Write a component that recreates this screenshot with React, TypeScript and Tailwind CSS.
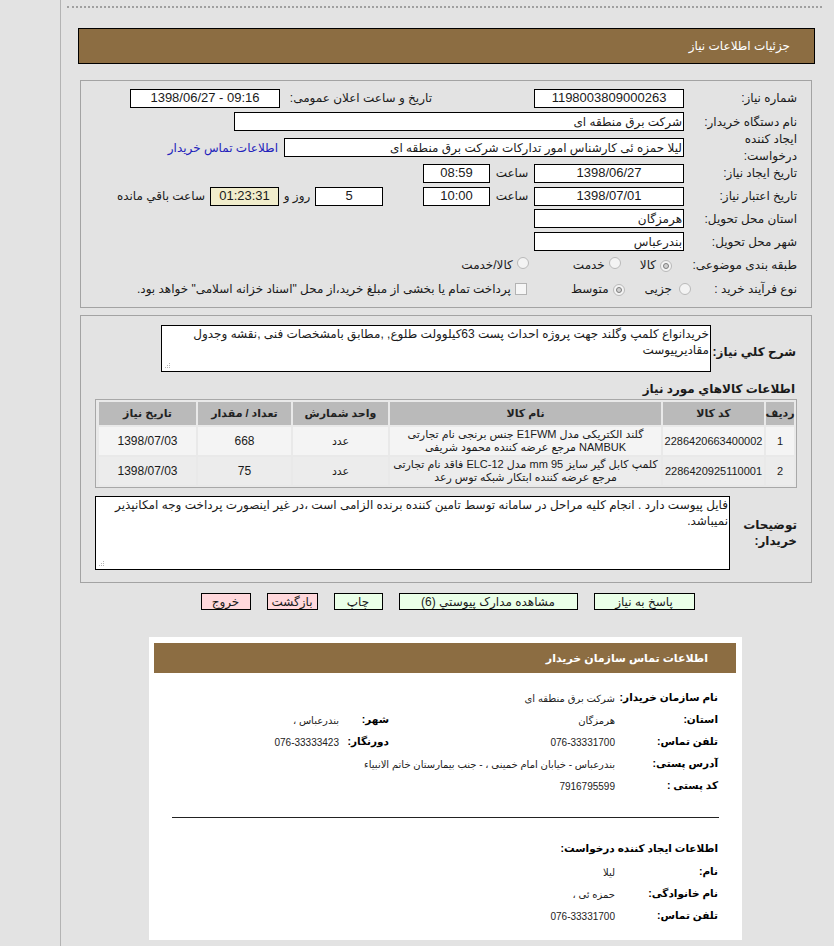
import React from "react";

const Radio = ({ checked }: { checked?: boolean }) => (
  <span className="inline-flex h-[12px] w-[12px] shrink-0 items-center justify-center rounded-full border border-[#b9b9b9] bg-[#f3f3f3]">
    {checked && <span className="h-[6px] w-[6px] rounded-full border border-[#7d7d7d] bg-[#d0d0d0]" />}
  </span>
);

const Grip = () => (
  <svg width="8" height="8" className="absolute bottom-[2px] left-[3px]">
    <g fill="#b4b4b4">
      <rect x="0" y="6" width="1" height="1" />
      <rect x="2" y="6" width="1" height="1" />
      <rect x="4" y="6" width="1" height="1" />
      <rect x="2" y="4" width="1" height="1" />
      <rect x="4" y="4" width="1" height="1" />
      <rect x="4" y="2" width="1" height="1" />
    </g>
  </svg>
);

const Label = ({ children }: { children: React.ReactNode }) => (
  <div className="w-[113px] shrink-0 text-right">{children}</div>
);

const CL = ({ children, w = "w-[103px]" }: { children: React.ReactNode; w?: string }) => (
  <div className={`${w} shrink-0 whitespace-nowrap text-[10.5px] font-bold text-black`}>{children}</div>
);

export default function App() {
  return (
    <div className="flex min-h-[946px] w-[834px] bg-[#e3e3e3] font-['Liberation_Sans','DejaVu_Sans',sans-serif] text-[12px] text-[#1a1a1a]">
      <div className="w-[61px] shrink-0 border-r border-[#b3b3b3]" />
      <div className="flex min-w-0 flex-1 flex-col">
        <div className="ml-[6px] mr-[12px] mt-[6px] border-t-2 border-dotted border-[#a0a0a0]" />
        <div
          dir="rtl"
          className="ml-[17px] mr-[19px] mt-[20px] flex h-[36px] items-center border border-black bg-[#8c6d42] pr-[24px] text-[12px] text-white"
        >
          جزئیات اطلاعات نیاز
        </div>

        {/* Panel 1 */}
        <div dir="rtl" className="ml-[19px] mr-[22px] mt-[16px] border border-[#a3a3a3] pb-[6px] pr-[14px] pt-[6px]">
          <div className="flex h-[22px] items-center">
            <Label>شماره نیاز:</Label>
            <div className="flex h-[19px] w-[150px] items-center justify-center border border-black bg-white text-[13px]">1198003809000263</div>
            <div className="ms-[102px] w-[152px] text-right">تاریخ و ساعت اعلان عمومی:</div>
            <div dir="ltr" className="flex h-[19px] w-[150px] items-center justify-center border border-black bg-white text-[13px]">1398/06/27 - 09:16</div>
          </div>
          <div className="flex h-[25px] items-center">
            <Label>نام دستگاه خریدار:</Label>
            <div className="flex h-[19px] w-[450px] items-center border border-black bg-white pr-[1px]">شرکت برق منطقه ای</div>
          </div>
          <div className="flex h-[27px] items-center">
            <Label>
              <div className="leading-[17px]">
                ایجاد کننده
                <br />
                درخواست:
              </div>
            </Label>
            <div className="flex h-[19px] w-[400px] items-center border border-black bg-white pr-[1px]">لیلا حمزه ئی کارشناس امور تدارکات شرکت برق منطقه ای</div>
            <a className="ms-[6px] text-[#2222bb]">اطلاعات تماس خریدار</a>
          </div>
          <div className="flex h-[24px] items-center">
            <Label>تاریخ ایجاد نیاز:</Label>
            <div className="flex h-[19px] w-[150px] items-center justify-center border border-black bg-white text-[13px]">1398/06/27</div>
            <div className="w-[44px] text-center">ساعت</div>
            <div className="flex h-[19px] w-[67px] items-center justify-center border border-black bg-white text-[13px]">08:59</div>
          </div>
          <div className="flex h-[22px] items-center">
            <Label>تاریخ اعتبار نیاز:</Label>
            <div className="flex h-[19px] w-[150px] items-center justify-center border border-black bg-white text-[13px]">1398/07/01</div>
            <div className="w-[44px] text-center">ساعت</div>
            <div className="flex h-[19px] w-[67px] items-center justify-center border border-black bg-white text-[13px]">10:00</div>
            <div className="ms-[40px] flex h-[19px] w-[68px] items-center justify-center border border-black bg-white text-[13px]">5</div>
            <div className="w-[36px] text-center">روز و</div>
            <div className="flex h-[19px] w-[69px] items-center justify-center border border-black bg-[#f1edcc] text-[13px]">01:23:31</div>
            <div className="ms-[5px]">ساعت باقي مانده</div>
          </div>
          <div className="flex h-[23px] items-center">
            <Label>استان محل تحویل:</Label>
            <div className="flex h-[19px] w-[150px] items-center border border-black bg-white pr-[1px]">هرمزگان</div>
          </div>
          <div className="flex h-[23px] items-center">
            <Label>شهر محل تحویل:</Label>
            <div className="flex h-[19px] w-[150px] items-center border border-black bg-white pr-[1px]">بندرعباس</div>
          </div>
          <div className="flex h-[24px] items-center">
            <Label>طبقه بندی موضوعی:</Label>
            <span className="ms-[12px]"><Radio checked /></span>
            <span className="ms-[4px]">کالا</span>
            <span className="ms-[19px]"><Radio /></span>
            <span className="ms-[4px]">خدمت</span>
            <span className="ms-[44px]"><Radio /></span>
            <span className="ms-[4px]">کالا/خدمت</span>
          </div>
          <div className="flex h-[24px] items-center">
            <div className="w-[106px] shrink-0 text-right">نوع فرآیند خرید :</div>
            <Radio />
            <span className="ms-[7px]">جزیی</span>
            <span className="ms-[20px]"><Radio checked /></span>
            <span className="ms-[4px]">متوسط</span>
            <span className="ms-[44px] inline-block h-[12px] w-[12px] border border-[#b3b3b3] bg-[#f6f6f6]" />
            <span className="ms-[4px]">پرداخت تمام یا بخشی از مبلغ خرید،از محل "اسناد خزانه اسلامی" خواهد بود.</span>
          </div>
        </div>

        {/* Panel 2 */}
        <div dir="rtl" className="ml-[19px] mr-[22px] mt-[7px] border border-[#a3a3a3] pb-[12px] pt-[9px]">
          <div className="flex items-center pr-[15px]">
            <div className="w-[85px] shrink-0 whitespace-nowrap pt-[6px] text-right text-[12px] font-bold">شرح كلي نياز:</div>
            <div className="relative h-[47px] w-[550px] border border-black bg-white px-[1px] text-right leading-[16px]">
              خریدانواع کلمپ وگلند جهت پروژه احداث پست 63کیلوولت طلوع, ,مطابق بامشخصات فنی ,نقشه وجدول مقادیرپیوست
              <Grip />
            </div>
          </div>
          <div className="mt-[9px] whitespace-nowrap pr-[16px] text-right text-[12px] font-bold leading-[16px]">اطلاعات كالاهاي مورد نياز</div>
          <div className="mx-[14px] mt-[2px] grid grid-cols-[28px_101px_271px_95px_93px_97px] gap-[2px] border border-[#a8a8a8] bg-[#e9e9e9] p-[2px]">
            {["ردیف", "کد کالا", "نام کالا", "واحد شمارش", "تعداد / مقدار", "تاریخ نیاز"].map((h) => (
              <div key={h} className="flex h-[23px] items-center justify-center whitespace-nowrap bg-[#bababa] text-[11px] font-bold text-[#222]">
                {h}
              </div>
            ))}
            {[
              {
                n: "1",
                c: "2286420663400002",
                name1: "گلند الکتریکی مدل E1FWM جنس برنجی نام تجارتی",
                name2: "NAMBUK مرجع عرضه کننده محمود شریفی",
                u: "عدد",
                q: "668",
                d: "1398/07/03",
                bg: "bg-[#f4f4f4]",
              },
              {
                n: "2",
                c: "2286420925110001",
                name1: "کلمپ کابل گیر سایز 95 mm مدل ELC-12 فاقد نام تجارتی",
                name2: "مرجع عرضه کننده ابتکار شبکه توس رعد",
                u: "عدد",
                q: "75",
                d: "1398/07/03",
                bg: "bg-[#ececec]",
              },
            ].map((r) => (
              <React.Fragment key={r.n}>
                <div className={`flex h-[28px] items-center justify-center text-[11px] ${r.bg}`}>{r.n}</div>
                <div className={`flex h-[28px] items-center justify-center text-[11px] ${r.bg}`}>{r.c}</div>
                <div className={`flex h-[28px] flex-col items-center justify-center text-[11px] leading-[13px] ${r.bg}`}>
                  <div>{r.name1}</div>
                  <div>{r.name2}</div>
                </div>
                <div className={`flex h-[28px] items-center justify-center text-[11px] ${r.bg}`}>{r.u}</div>
                <div className={`flex h-[28px] items-center justify-center text-[12px] ${r.bg}`}>{r.q}</div>
                <div className={`flex h-[28px] items-center justify-center text-[12px] ${r.bg}`}>{r.d}</div>
              </React.Fragment>
            ))}
          </div>
          <div className="mt-[8px] flex items-center pr-[14px]">
            <div className="w-[67px] shrink-0 text-right text-[12px] font-bold leading-[16px]">
              توضیحات
              <br />
              خریدار:
            </div>
            <div className="relative h-[74px] w-[635px] border border-black bg-white px-[1px] text-right leading-[16px]">
              فایل پیوست دارد . انجام کلیه مراحل در سامانه توسط تامین کننده برنده الزامی است ،در غیر اینصورت پرداخت وجه امکانپذیر نمیباشد.
              <Grip />
            </div>
          </div>
        </div>

        {/* Buttons */}
        <div dir="rtl" className="mt-[10px] flex justify-center gap-[16px]">
          <div className="flex h-[17px] w-[101px] items-center justify-center border border-black bg-[#eaffe8] text-[12px]">پاسخ به نیاز</div>
          <div className="flex h-[17px] w-[179px] items-center justify-center border border-black bg-[#eaffe8] text-[12px]">مشاهده مدارک پیوستي (6)</div>
          <div className="flex h-[17px] w-[49px] items-center justify-center border border-black bg-[#eaffe8] text-[12px]">چاپ</div>
          <div className="flex h-[17px] w-[51px] items-center justify-center border border-black bg-[#ffd8dc] text-[12px]">بازگشت</div>
          <div className="flex h-[17px] w-[50px] items-center justify-center border border-black bg-[#ffd8dc] text-[12px]">خروج</div>
        </div>

        {/* Contact card */}
        <div dir="rtl" className="ml-[88px] mt-[27px] w-[593px] bg-white pb-[13px] pl-[5px] pr-[6px] pt-[6px]">
          <div className="flex h-[30px] items-center bg-[#8c6d42] pr-[28px] text-[11px] font-bold text-white">
            اطلاعات تماس سازمان خریدار
          </div>
          <div className="mt-[14px] pr-[18px] text-[10px] text-[#222]">
            <div className="flex h-[22px] items-center">
              <CL>نام سازمان خریدار:</CL>
              <div>شرکت برق منطقه ای</div>
            </div>
            <div className="flex h-[22px] items-center">
              <CL>استان:</CL>
              <div className="w-[226px] shrink-0">هرمزگان</div>
              <CL w="w-[50px]">شهر:</CL>
              <div>بندرعباس ،</div>
            </div>
            <div className="flex h-[22px] items-center">
              <CL>تلفن تماس:</CL>
              <div className="w-[226px] shrink-0">076-33331700</div>
              <CL w="w-[50px]">دورنگار:</CL>
              <div>076-33333423</div>
            </div>
            <div className="flex h-[22px] items-center">
              <CL>آدرس پستی:</CL>
              <div>بندرعباس - خیابان امام خمینی ، - جنب بیمارستان خاتم الانبیاء</div>
            </div>
            <div className="flex h-[22px] items-center">
              <CL>کد پستی :</CL>
              <div>7916795599</div>
            </div>
          </div>
          <div className="ml-[18px] mr-[17px] mt-[20px] border-t border-[#222]" />
          <div className="mt-[22px] pr-[18px] text-[10.5px] font-bold leading-[16px] text-black">اطلاعات ایجاد کننده درخواست:</div>
          <div className="mt-[5px] pr-[18px] text-[10px] text-[#222]">
            <div className="flex h-[22px] items-center">
              <CL>نام:</CL>
              <div>لیلا</div>
            </div>
            <div className="flex h-[22px] items-center">
              <CL>نام خانوادگی:</CL>
              <div>حمزه ئی ،</div>
            </div>
            <div className="flex h-[22px] items-center">
              <CL>تلفن تماس:</CL>
              <div>076-33331700</div>
            </div>
          </div>
        </div>
      </div>
    </div>
  );
}
